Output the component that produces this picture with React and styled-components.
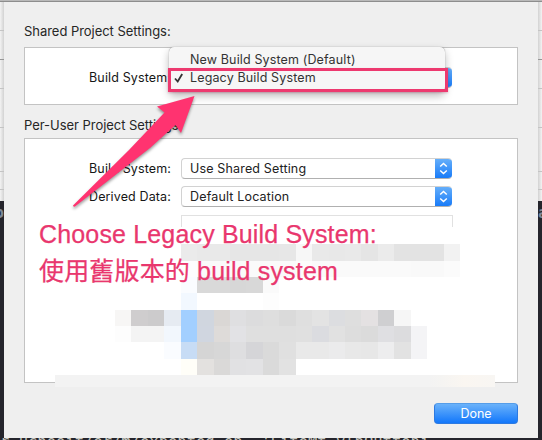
import React from "react";
import styled, { createGlobalStyle } from "styled-components";

const GlobalStyle = createGlobalStyle`
  * { box-sizing: border-box; }
  body { margin: 0; overflow: hidden; }
`;

const Screen = styled.div`
  position: relative;
  display: grid;
  grid-template-columns: 4px 534px 4px;
  grid-template-rows: 2px 436px 2px;
  width: 542px;
  height: 440px;
  overflow: hidden;
  background: #25252c;
  font-family: Inter, "Open Sans", sans-serif;
  font-size: 12.5px;
  color: #262626;
`;

const TitleStrip = styled.div`
  grid-column: 1 / -1;
  background: linear-gradient(#b9b9b9 50%, #8d8d8d 50%);
`;

const Gutter = styled.div`
  display: flex;
  flex-direction: column;
  overflow: hidden;
`;

const GutterRow = styled.div`
  flex: none;
  height: ${(p) => p.$height}px;
  background: linear-gradient(${(p) => (p.$side === "left" ? "90deg" : "270deg")}, #f3f3f3, #d2d2d2);
  border-bottom: 1px solid ${(p) => p.$line || "#c4c4c4"};
`;

const GutterCode = styled.div`
  display: flex;
  justify-content: ${(p) => (p.$side === "left" ? "flex-end" : "flex-start")};
  width: 4px;
  height: 60px;
  color: #7c8797;
  font: bold 16px/21px "DejaVu Sans Mono", monospace;
`;

const CodeStrip = styled.div`
  grid-column: 1 / -1;
  height: 2px;
  overflow: hidden;
  white-space: pre;
  color: #c4c4bd;
  font: 15.5px/8px "DejaVu Sans Mono", monospace;
`;

const Dialog = styled.main`
  display: flex;
  flex-direction: column;
  padding: 20px 20px 14px;
  background: #efefef;
`;

const SectionTitle = styled.h2`
  margin: 0;
  height: ${(p) => p.$height}px;
  font-size: 13px;
  font-weight: 400;
  line-height: 18px;
  letter-spacing: -0.04px;
  white-space: nowrap;
`;

const Panel = styled.section`
  display: flex;
  flex: none;
  flex-direction: column;
  gap: 7px;
  height: ${(p) => p.$height}px;
  padding-top: ${(p) => p.$top}px;
  margin-bottom: ${(p) => p.$gap}px;
  background: #fff;
  border: 1px solid #c3c3c3;
`;

const Row = styled.div`
  display: grid;
  grid-template-columns: 146px 271px;
  column-gap: 10px;
  align-items: center;
  height: 21px;
`;

const Label = styled.label`
  color: #161616;
  letter-spacing: 0.13px;
  text-align: right;
  white-space: nowrap;
`;

const Select = styled.div`
  display: flex;
  align-items: center;
  justify-content: space-between;
  height: 21px;
  padding-left: 8px;
  overflow: hidden;
  background: #fff;
  border: 1px solid #d2d2d2;
  border-bottom-color: #b0b0b0;
  border-right: 0;
  border-radius: 4px;
  color: #222;
  letter-spacing: 0.16px;
`;

const Stepper = styled.span`
  display: flex;
  align-items: center;
  justify-content: center;
  width: 17px;
  height: 21px;
  background: linear-gradient(#69b1fa, #1579f8);
  box-shadow: inset 0 -1px #126bdf;
`;

const EmptyField = styled.div`
  width: 272px;
  height: 12px;
  margin: 1px 0 0 156px;
  border: 1px solid #e1e1e1;
  border-bottom: 0;
`;

const DoneButton = styled.button`
  align-self: flex-end;
  width: 84px;
  height: 21px;
  margin-top: 20px;
  padding: 0;
  border: 1px solid #2d7ae1;
  border-top-color: #559de9;
  border-radius: 4px;
  background: linear-gradient(#6ab2fa, #1277fb);
  color: #fff;
  font: 12.5px/18px Inter, sans-serif;
`;

const Menu = styled.div`
  position: absolute;
  top: 47px;
  left: 169px;
  width: 276px;
  height: 45px;
  padding-top: 3px;
  background: #f6f6f6;
  border-radius: 5px;
  box-shadow: 0 0 1px #777, 0 4px 9px rgba(0, 0, 0, 0.27);
`;

const MenuItem = styled.div`
  display: grid;
  grid-template-columns: 16px 1fr;
  column-gap: 5px;
  align-items: center;
  height: 18.5px;
  letter-spacing: 0.14px;
  color: #333;
  white-space: nowrap;
`;

const Highlight = styled.div`
  position: absolute;
  top: 68px;
  left: 168px;
  width: 280px;
  height: 24px;
  border: 3px solid #ed396f;
  box-shadow: 0 1px 2px rgba(180, 60, 100, 0.3);
`;

const Mosaic = styled.div`
  position: absolute;
  top: 244px;
  left: 115px;
  display: grid;
  grid-template-columns: repeat(21, 1fr);
  grid-template-rows: 17px 16px 16px 17px 16px 16px 17px 16px;
  width: 345px;
`;

const Tile = styled.i`
  background: ${(p) => p.$color};
`;

const RedactedBand = styled.div`
  position: absolute;
  top: 375px;
  left: 55px;
  width: 440px;
  height: 12px;
  background: linear-gradient(90deg, #f3f3f3 0 85%, #f5f4f2 88%, #faf6f1 93%, #f8f6f3);
`;

const Arrow = styled.svg`
  position: absolute;
  top: 90px;
  left: 65px;
  width: 140px;
  height: 124px;
  filter: drop-shadow(0 2px 1.5px rgba(0, 0, 0, 0.4));
`;

const Note = styled.div`
  position: absolute;
  top: 216px;
  left: 39px;
  color: #e9376e;
  font: 25px/36px "Liberation Sans", "Noto Sans CJK TC", sans-serif;
  -webkit-text-stroke: 0.25px #e9376e;
  white-space: nowrap;
`;

const NoteLine = styled.div`
  height: 37px;
  letter-spacing: 0.16px;
`;

const gutterRows = [
  [29], [29, "#969696"], [29], [39], [44], [18],
];

const tiles = [
  "- - - - ebebeb e9e9e9 e9e9e9 e6e6e6 e6e6e6 e6e6e6 e7e7e7 f7f7f7 e9e9e9 e8e8e8 e9e9e9 e5e5e5 ebebeb e3e3e3 e3e3e3 e3e3e3 f2f2f2",
  "- - - - fdfdfd fafafa fafafa fafafa fafafa fafafa fafafa fcfcfc fafafa fafafa fafafa fafafa fafafa fafafa f9f9f9 f9f9f9 fbfbfb",
  "- - - - fafcff d9d9d9 d9d9d9 d7d7d7 d8d8d8 fafafa - - - - - - - - - - -",
  "- - - - f2f8ff - - - - fdfdfd - - - - - - - - - - -",
  "f7f6f5 cfcdce cccbcc e6ebf2 a2cfff d0d6df dad7d5 dfdfe1 dcdcdd dedede dadada dfdfdf e3e3e3 dcdde0 dedede e4e1e2 cfcfd1 f6f6f6 - - -",
  "fdfdfd f4f4f4 f4f4f4 f2f7fd a2cfff d0d6e0 dedbd9 e2e2e5 dfdfdf dfdfdf dfdfdf e0e0e0 dbdce0 e1e1e1 dddddd dbdbdb dfdfe2 dcdcde f4f4f6 - -",
  "- - - fafcff c7dcf5 d5d5d5 d7d7d7 dedee0 d5d5d8 dadada e0e0e0 e9e9e9 e9e9e9 ebebec e8e8e8 e7e7e7 ededee e2e2e2 f4f4f6 - -",
  "- - - - fffef8 e3e1df dad9d8 e1e1e3 e2e2e4 dadada e2e2e2 - - - - - - - - - -",
].join(" ").split(" ");

function SideGutter({ side, glyph }) {
  return (
    <Gutter>
      {gutterRows.map(([height, line], i) => (
        <GutterRow key={i} $height={height} $line={line} $side={side} />
      ))}
      <GutterRow $height={12} $line="#25252c" $side={side} />
      <GutterCode $side={side}>{glyph}</GutterCode>
    </Gutter>
  );
}

function Popup({ children }) {
  return (
    <Select>
      <span>{children}</span>
      <Stepper>
        <svg width="9" height="13" viewBox="0 0 9 13" fill="none" stroke="#fff" strokeWidth="1.5">
          <path d="M1.2 4.5 4.5 1.5 7.8 4.5M1.2 8.5 4.5 11.5 7.8 8.5" />
        </svg>
      </Stepper>
    </Select>
  );
}

export default function App() {
  return (
    <Screen>
      <GlobalStyle />
      <TitleStrip />
      <SideGutter side="left" glyph="p" />
      <Dialog>
        <SectionTitle $height={25}>Shared Project Settings:</SectionTitle>
        <Panel $height={58} $top={19} $gap={11}>
          <Row>
            <Label>Build System:</Label>
            <Popup />
          </Row>
        </Panel>
        <SectionTitle $height={22}>Per-User Project Settings:</SectionTitle>
        <Panel $height={245} $top={19} $gap={0}>
          <Row>
            <Label>Build System:</Label>
            <Popup>Use Shared Setting</Popup>
          </Row>
          <Row>
            <Label>Derived Data:</Label>
            <Popup>Default Location</Popup>
          </Row>
          <EmptyField />
        </Panel>
        <DoneButton>Done</DoneButton>
      </Dialog>
      <SideGutter side="right" glyph="a" />
      <CodeStrip>{"r.uchooit/er/m/expented.on  'LiteMt.vlbOuttoni"}</CodeStrip>
      <Mosaic>
        {tiles.map((tile, i) => (
          <Tile key={i} $color={tile === "-" ? "transparent" : `#${tile}`} />
        ))}
      </Mosaic>
      <RedactedBand />
      <Menu>
        <MenuItem><span /><span>New Build System (Default)</span></MenuItem>
        <MenuItem>
          <svg width="16" height="14" viewBox="0 0 16 14" fill="none" stroke="#333" strokeWidth="1.8">
            <path d="m6 7.5 2.7 3L13.2 3" />
          </svg>
          <span>Legacy Build System</span>
        </MenuItem>
      </Menu>
      <Highlight />
      <Arrow viewBox="65 90 140 124">
        <path d="M194.5 96 157 106.5 164.5 112.5 129 150 73 205.5Q73 207 75 206.5L150 148 175.5 125 181 133Z" fill="#ff3370" />
      </Arrow>
      <Note>
        <NoteLine>Choose Legacy Build System:</NoteLine>
        <NoteLine>使用舊版本的 build system</NoteLine>
      </Note>
    </Screen>
  );
}
